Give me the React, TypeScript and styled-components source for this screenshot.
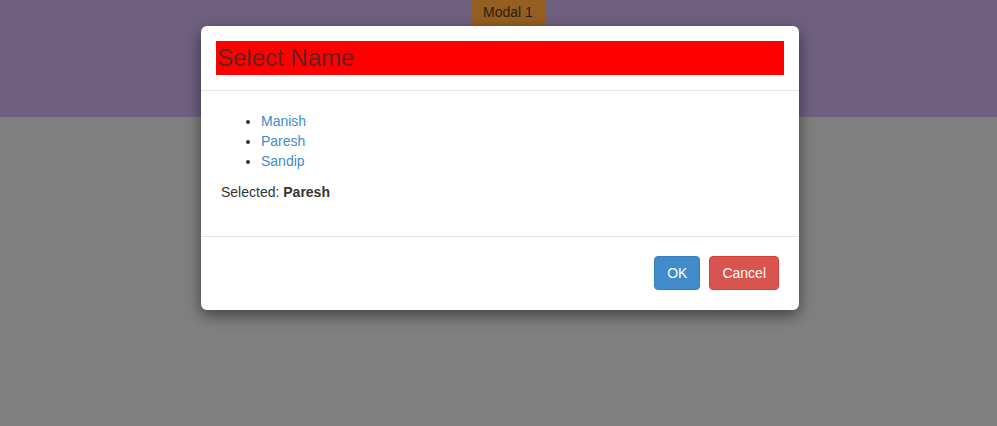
import { createGlobalStyle, styled } from "styled-components"

const names = ["Manish", "Paresh", "Sandip"]

export default function App() {
  const selected = "Paresh"
  return <>
    <Global />
    <Page>
      <TopBand>
        <Tab>Modal 1</Tab>
      </TopBand>
    </Page>
    <Modal>
      <Header>
        <Title>Select Name</Title>
      </Header>
      <Body>
        <NameList>
          {names.map(n => <li key={n}><NameLink href="#">{n}</NameLink></li>)}
        </NameList>
        <Selected>Selected: <b>{selected}</b></Selected>
      </Body>
      <Footer>
        <Btn $kind="primary">OK</Btn>
        <Btn $kind="danger">Cancel</Btn>
      </Footer>
    </Modal>
  </>
}

const Global = createGlobalStyle`
  html, body { margin: 0; padding: 0; }
  body {
    background: #808080;
    font-family: "Liberation Sans", Arial, sans-serif;
    font-size: 14px;
    line-height: 20px;
    color: #333;
  }
`

const Page = styled.div`
  height: 426px;
  background: #808080;
`

const TopBand = styled.div`
  height: 117px;
  background: #6f6080;
  display: flex;
  justify-content: center;
`

const Tab = styled.div`
  width: 74px;
  height: 25px;
  margin-left: 19px;
  background: #955f20;
  color: #2a1f14;
  text-align: center;
  line-height: 24px;
  font-size: 14px;
`

const Modal = styled.div`
  position: absolute;
  top: 26px;
  left: 201px;
  width: 598px;
  background: #fff;
  border-radius: 6px;
  box-shadow: 0 5px 15px rgba(0,0,0,.5);
`

const Header = styled.div`
  padding: 15px;
  border-bottom: 1px solid #e5e5e5;
`

const Title = styled.h4`
  margin: 0;
  height: 34px;
  background: #ff0000;
  color: #662222;
  font-weight: normal;
  font-size: 24px;
  line-height: 34px;
  padding-left: 1px;
`

const Body = styled.div`
  padding: 20px 20px 34px;
`

const NameList = styled.ul`
  margin: 0 0 11px;
  padding-left: 40px;
`

const NameLink = styled.a`
  color: #428bca;
  text-decoration: none;
`

const Selected = styled.div`
  b { font-weight: bold; }
`

const Footer = styled.div`
  border-top: 1px solid #e5e5e5;
  padding: 19px 20px 20px;
  display: flex;
  justify-content: flex-end;
  gap: 9px;
`

const Btn = styled.button<{ $kind: "primary" | "danger" }>`
  height: 34px;
  padding: 0 12px;
  border-radius: 4px;
  border: 1px solid ${p => p.$kind === "primary" ? "#357ebd" : "#d43f3a"};
  background: ${p => p.$kind === "primary" ? "#428bca" : "#d9534f"};
  color: #fff;
  font-family: "Liberation Sans", Arial, sans-serif;
  font-size: 14px;
  line-height: 20px;
`
